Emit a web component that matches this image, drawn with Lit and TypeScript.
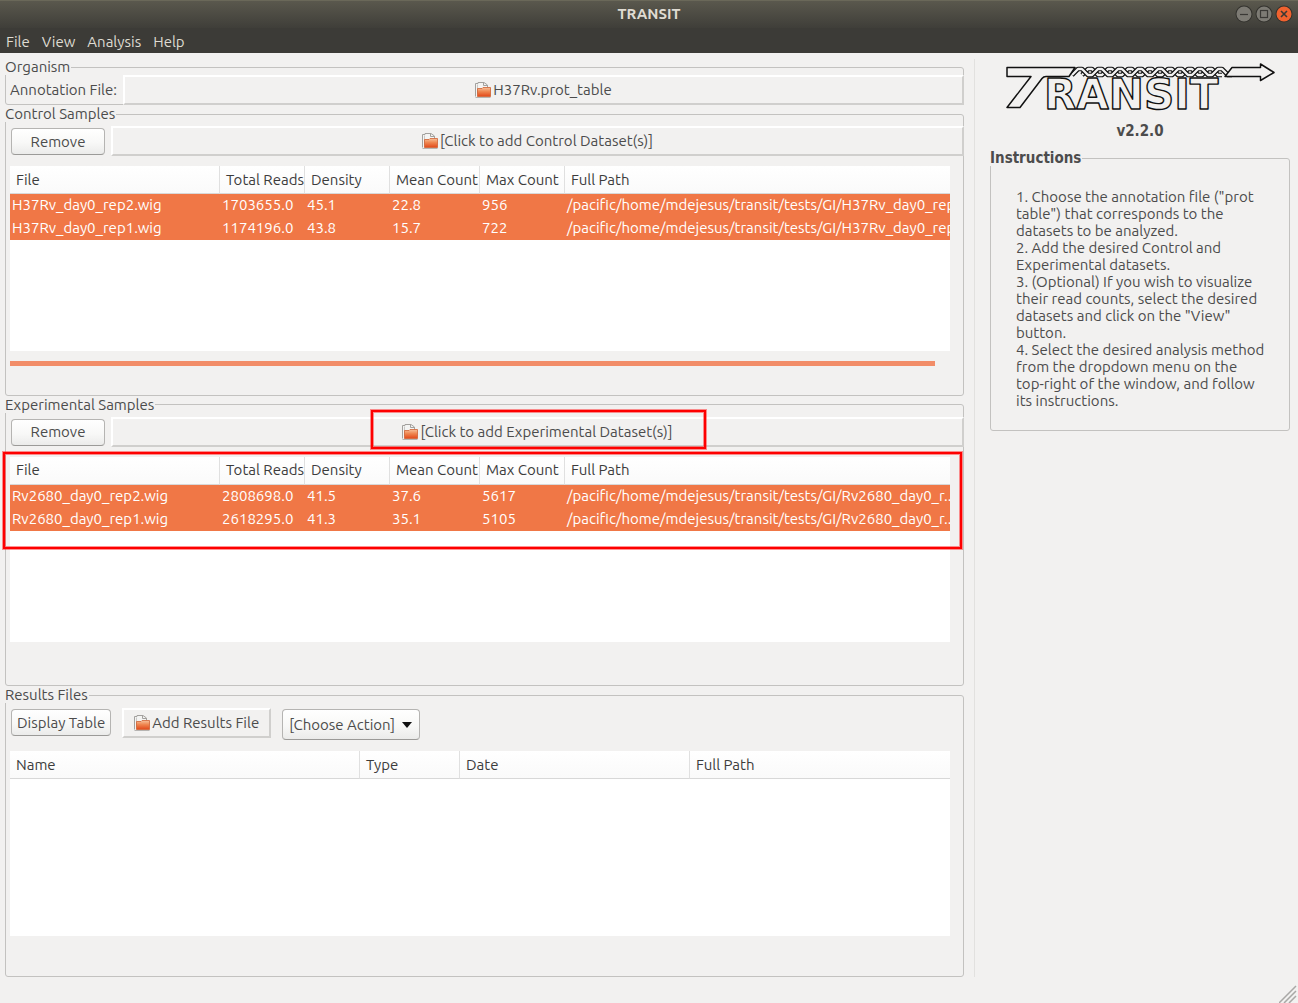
import { LitElement, html, svg, css, nothing } from "lit";
import { customElement, state } from "lit/decorators.js";

interface Column {
  label: string;
  width?: number;
}

interface SampleGroup {
  id: string;
  title: string;
  prompt: string;
  rows: string[][];
  scrollbar: boolean;
  highlighted: boolean;
}

const SAMPLE_COLUMNS: Column[] = [
  { label: "File", width: 210 },
  { label: "Total Reads", width: 85 },
  { label: "Density", width: 85 },
  { label: "Mean Count", width: 90 },
  { label: "Max Count", width: 85 },
  { label: "Full Path" },
];

const RESULT_COLUMNS: Column[] = [
  { label: "Name", width: 350 },
  { label: "Type", width: 100 },
  { label: "Date", width: 230 },
  { label: "Full Path" },
];

const GROUPS: SampleGroup[] = [
  {
    id: "control",
    title: "Control Samples",
    prompt: "[Click to add Control Dataset(s)]",
    rows: [
      ["H37Rv_day0_rep2.wig", "1703655.0", "45.1", "22.8", "956", "/pacific/home/mdejesus/transit/tests/GI/H37Rv_day0_rep2.wig"],
      ["H37Rv_day0_rep1.wig", "1174196.0", "43.8", "15.7", "722", "/pacific/home/mdejesus/transit/tests/GI/H37Rv_day0_rep1.wig"],
    ],
    scrollbar: true,
    highlighted: false,
  },
  {
    id: "experimental",
    title: "Experimental Samples",
    prompt: "[Click to add Experimental Dataset(s)]",
    rows: [
      ["Rv2680_day0_rep2.wig", "2808698.0", "41.5", "37.6", "5617", "/pacific/home/mdejesus/transit/tests/GI/Rv2680_day0_r..."],
      ["Rv2680_day0_rep1.wig", "2618295.0", "41.3", "35.1", "5105", "/pacific/home/mdejesus/transit/tests/GI/Rv2680_day0_r..."],
    ],
    scrollbar: false,
    highlighted: true,
  },
];

const INSTRUCTIONS = [
  '1. Choose the annotation file ("prot table") that corresponds to the datasets to be analyzed.',
  "2. Add the desired Control and Experimental datasets.",
  '3. (Optional) If you wish to visualize their read counts, select the desired datasets and click on the "View" button.',
  "4. Select the desired analysis method from the dropdown menu on the top-right of the window, and follow its instructions.",
];

const folderIcon = html`<svg class="folder" viewBox="0 0 16 16" width="16" height="16" aria-hidden="true">
  <defs>
    <linearGradient id="fold" x1="0" y1="0" x2="0" y2="1">
      <stop offset="0" stop-color="#f7c09a" />
      <stop offset="0.45" stop-color="#ef8650" />
      <stop offset="1" stop-color="#e2481a" />
    </linearGradient>
  </defs>
  <path d="M.5 14.500V1.500H3V.5H9L12.500 3V5.500" fill="#f4f4f3" stroke="#a3a19e" />
  <path d="M2.500 12V2.500" stroke="#c9c8c6" fill="none" />
  <path d="M8.500.5V3.500H12.500" fill="none" stroke="#a3a19e" />
  <path d="M2.500 14.500V6.500H7L8 5.500H15.500V14.500z" fill="url(#fold)" stroke="#cf6233" stroke-opacity=".8" />
  <path d="M.5 15.500H15.500" stroke="#8f8d8a" opacity=".6" />
</svg>`;

/** Zigzag centre line of one helix strand, with short flats at crest and trough. */
function strand(start: number, count: number): string {
  let d = `M${start - 8} 12`;
  for (let i = 0; i < count; i++) {
    const x = start + i * 20;
    d += `L${x - 2} 6H${x + 2}L${x + 8} 12H${x + 12}`;
  }
  return d;
}

@customElement("app-root")
export class AppRoot extends LitElement {
  @state() private annotation = "H37Rv.prot_table";

  static styles = css`
    :host {
      display: flex;
      flex-direction: column;
      min-height: 100vh;
      box-sizing: border-box;
      position: relative;
      background: #f2f1f0;
      color: #4c4c4c;
      font: 15px/16px "Ubuntu", "Noto Sans", "Open Sans", sans-serif;
    }
    * { box-sizing: border-box; }
    button, select { font: inherit; color: inherit; margin: 0; }

    .titlebar {
      display: grid;
      grid-template-columns: 1fr auto 1fr;
      align-items: center;
      height: 28px;
      padding: 0 5px;
      background: linear-gradient(#5b594e, #3f3e39);
      box-shadow: inset 0 1px #6a6859;
      color: #dfdbd2;
    }
    .titlebar h1 { grid-column: 2; margin: 0; font-size: 15px; font-weight: 700; }
    .window-buttons { display: flex; justify-content: flex-end; gap: 2px; }
    .window-buttons button { padding: 0; border: 0; background: none; height: 18px; width: 18px; }
    .window-buttons svg { display: block; }

    .menubar {
      display: flex;
      gap: 12px;
      height: 25px;
      padding: 0 6px;
      background: #3c3b37;
      color: #dfdbd2;
    }
    .menubar button { padding: 0; border: 0; background: none; height: 27px; }

    .body { flex: 1; display: flex; padding: 6px 8px 26px 5px; }
    .left { flex: 1; min-width: 0; display: flex; flex-direction: column; gap: 1px; }
    .right {
      flex: none;
      width: 316px;
      margin-left: 10px;
      padding: 4px 0 0 15px;
      border-left: 1px solid #e2e1df;
    }

    fieldset {
      min-width: 0;
      margin: 0;
      padding: 0;
      border: 1px solid #c3c2c0;
      border-radius: 3px;
    }
    legend {
      margin-left: -1px;
      padding: 0 1px 0 0;
      height: 16px;
      background: #f2f1f0;
    }
    .group { flex: 1 1 0; }

    .organism { display: flex; align-items: center; gap: 6px; padding-left: 4px; margin: 0 -1px -1px 0; }
    .tools { display: flex; align-items: flex-start; gap: 6px; padding: 4px 0 0 5px; margin-right: -1px; }
    .tools .push { margin-top: 2px; }
    .results-tools { gap: 11px; padding-top: 5px; }
    .results-tools .push, .results-tools .choice { margin-top: 1px; }

    .push {
      min-width: 94px;
      height: 27px;
      padding: 0 5px;
      border: 1px solid #b5b4b2;
      border-bottom-color: #9b9a98;
      border-radius: 4px;
      background: linear-gradient(#ffffff, #f8f8f7 55%, #ebebea);
      white-space: nowrap;
    }
    .picker {
      position: relative;
      display: flex;
      align-items: center;
      justify-content: center;
      gap: 2px;
      height: 30px;
      padding: 0 10px;
      border: 2px solid;
      border-color: #ffffff #d0cfcd #d0cfcd #ffffff;
      background: #f2f1f0;
      white-space: nowrap;
    }
    .wide { flex: 1; }
    .folder { flex: none; display: block; }

    .choice { position: relative; display: flex; align-items: center; }
    .choice select {
      appearance: none;
      height: 31px;
      padding: 0 24px 0 6px;
      border: 1px solid #b5b4b2;
      border-bottom-color: #9b9a98;
      border-radius: 4px;
      background: linear-gradient(#ffffff, #f8f8f7 55%, #ebebea);
    }
    .choice svg { position: absolute; right: 8px; pointer-events: none; }

    .list {
      position: relative;
      margin: 10px 13px 0 4px;
    }
    .results-list { margin-top: 11px; }
    .viewport { min-height: 185px; background: #ffffff; }
    table { width: 100%; table-layout: fixed; border-collapse: separate; border-spacing: 0; }
    th, td {
      text-align: left;
      white-space: nowrap;
      overflow: hidden;
      text-overflow: clip;
    }
    th {
      height: 28px;
      padding: 0 0 0 6px;
      font-weight: 400;
      color: #3c3c3c;
      border-bottom: 1px solid #d8d8d8;
      border-right: 1px solid #e0e0e0;
      background: linear-gradient(#ffffff, #fafafa);
    }
    th:last-child { border-right: 0; }
    td { height: 23px; padding: 0 0 1px 2px; background: #f07746; color: #ffffff; }
    .scrollbar { height: 5px; margin: 10px 15px 0 0; background: #f28d68; }

    .mark {
      position: absolute;
      border: 2px solid #fe0000;
      box-shadow: 0 0 0 1px rgba(255, 40, 40, 0.5), inset 0 0 0 1px rgba(255, 40, 40, 0.5);
      pointer-events: none;
    }
    .mark-picker { left: calc(50% - 167px); width: 335px; top: -9px; height: 39px; }
    .mark-list { left: -7px; right: -12px; top: -5px; height: 97px; }

    .logo { display: block; margin: 0 auto; }
    .logo text { font-family: "DejaVu Sans", sans-serif; font-weight: 700; font-size: 42px; }
    .version, .instructions legend {
      font-family: "DejaVu Sans Condensed", "Ubuntu", "Noto Sans", sans-serif;
      font-weight: 700;
    }
    .version { margin: 12px 0 11px; text-align: center; }
    .instructions div { padding: 22px 22px 21px 25px; line-height: 17px; }
    .instructions p { margin: 0; }

    .grip { position: absolute; right: 1px; bottom: 0; }
  `;

  private renderTable(label: string, columns: Column[], rows: string[][]) {
    return html`<div class="viewport">
      <table aria-label=${label}>
        <colgroup>
          ${columns.map((c) => html`<col style=${c.width ? `width:${c.width}px` : ""} />`)}
        </colgroup>
        <thead>
          <tr>${columns.map((c) => html`<th scope="col">${c.label}</th>`)}</tr>
        </thead>
        <tbody>
          ${rows.map((r) => html`<tr>${r.map((v) => html`<td>${v}</td>`)}</tr>`)}
        </tbody>
      </table>
    </div>`;
  }

  private renderGroup(g: SampleGroup) {
    return html`<fieldset class="group">
      <legend>${g.title}</legend>
      <div class="tools">
        <button class="push" type="button">Remove</button>
        <button class="picker wide" type="button">
          ${folderIcon}<span>${g.prompt}</span>
          ${g.highlighted ? html`<span class="mark mark-picker"></span>` : nothing}
        </button>
      </div>
      <div class="list">
        ${this.renderTable(g.title, SAMPLE_COLUMNS, g.rows)}
        ${g.scrollbar ? html`<div class="scrollbar"></div>` : nothing}
        ${g.highlighted ? html`<span class="mark mark-list"></span>` : nothing}
      </div>
    </fieldset>`;
  }

  private renderWindowButton(name: string, fill: string, glyph: unknown) {
    return html`<button type="button" aria-label=${name}>
      <svg viewBox="0 0 18 18" width="18" height="18">
        <circle cx="9" cy="9" r="8.500" fill="#33322e" />
        <circle cx="9" cy="9" r="7.500" fill=${fill} />
        <g fill="none" stroke="#3a3935" stroke-width="1.200">${glyph}</g>
      </svg>
    </button>`;
  }

  private renderLogo() {
    const back = strand(84, 7);
    const front = strand(74, 8);
    return html`<svg class="logo" viewBox="-1 0 270 48" width="270" height="48" role="img" aria-label="TRANSIT">
      <g fill="none" stroke-linejoin="round">
        ${[back, front].map(
          (d) => svg`<path d=${d} stroke="#111111" stroke-width="4.600" />
            <path d=${d} stroke="#f2f1f0" stroke-width="2.400" />`
        )}
      </g>
      <g fill="#f2f1f0" stroke="#111111" stroke-width="1.500" stroke-linejoin="round">
        <path d="M69 4.500H1V13.500H25L1 44.500H14L36 15.500Q37.500 13.500 40 13.500H63z" />
        <path d="M219 13.500L226 4.500H254.500V1L268 9.500L254.500 17.500V13.500z" />
        <text x="38" y="46" stroke-width="1.400" fill="none">RANSIT</text>
      </g>
    </svg>`;
  }

  render() {
    return html`
      <header class="titlebar">
        <h1>TRANSIT</h1>
        <div class="window-buttons">
          ${this.renderWindowButton("Minimize", "#7d7b74", svg`<path d="M5 9.500H13" />`)}
          ${this.renderWindowButton("Maximize", "#7d7b74", svg`<rect x="5.500" y="5.500" width="7" height="7" />`)}
          ${this.renderWindowButton("Close", "#f0622f", svg`<path d="M6 6L12 12M12 6L6 12" stroke-width="1.600" />`)}
        </div>
      </header>
      <nav class="menubar">
        ${["File", "View", "Analysis", "Help"].map((m) => html`<button type="button">${m}</button>`)}
      </nav>
      <main class="body">
        <div class="left">
          <fieldset>
            <legend>Organism</legend>
            <div class="organism">
              <label for="annotation">Annotation File:</label>
              <button id="annotation" class="picker wide" type="button">
                ${folderIcon}<span>${this.annotation}</span>
              </button>
            </div>
          </fieldset>
          ${GROUPS.map((g) => this.renderGroup(g))}
          <fieldset class="group">
            <legend>Results Files</legend>
            <div class="tools results-tools">
              <button class="push" type="button">Display Table</button>
              <button class="picker" type="button">${folderIcon}<span>Add Results File</span></button>
              <div class="choice">
                <select aria-label="Action">
                  <option>[Choose Action]</option>
                </select>
                <svg viewBox="0 0 10 6" width="10" height="6" aria-hidden="true"><path d="M0 0H10L5 6z" fill="#111111" /></svg>
              </div>
            </div>
            <div class="list results-list">
              ${this.renderTable("Results Files", RESULT_COLUMNS, [])}
            </div>
          </fieldset>
        </div>
        <aside class="right">
          ${this.renderLogo()}
          <p class="version">v2.2.0</p>
          <fieldset class="instructions">
            <legend>Instructions</legend>
            <div>${INSTRUCTIONS.map((t) => html`<p>${t}</p>`)}</div>
          </fieldset>
        </aside>
      </main>
      <svg class="grip" viewBox="0 0 18 18" width="18" height="18" aria-hidden="true">
        <path d="M0 18L17 1M5 18L17 6M10 18L17 11" stroke="#a9a8a6" stroke-width="1.500" fill="none" />
      </svg>
    `;
  }
}
